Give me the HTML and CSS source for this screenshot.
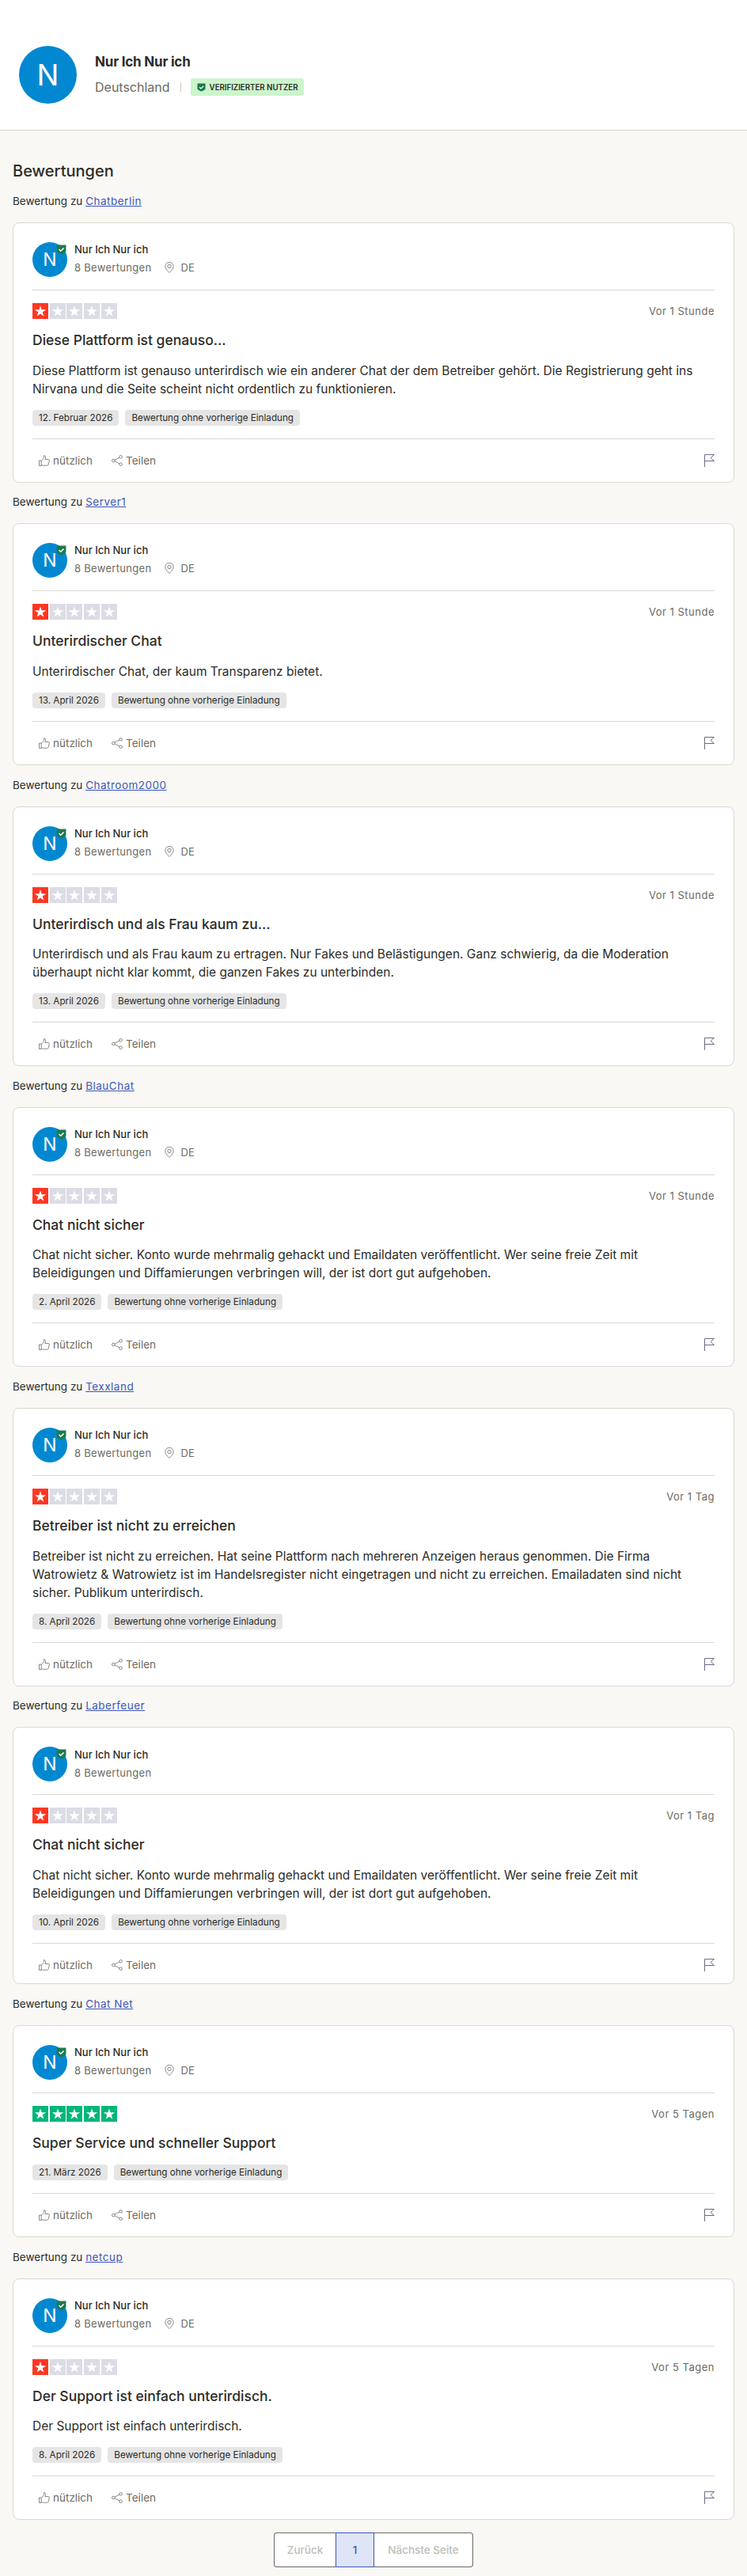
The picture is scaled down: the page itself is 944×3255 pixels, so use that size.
FILE: index.html
```html
<!DOCTYPE html>
<html lang="de">
<head>
<meta charset="utf-8">
<title>Nur Ich Nur ich</title>
<link rel="stylesheet" href="styles.css">
</head>
<body>
<svg class="defs" width="0" height="0" aria-hidden="true">
  <symbol id="star" viewBox="0 0 20 20"><path d="M10 3.2l1.7 5.1h5.4l-4.4 3.1 1.7 5.2L10 13.4l-4.4 3.2 1.7-5.2-4.400-3.100h5.400z" fill="#fff"/></symbol>
  <symbol id="thumb" viewBox="0 0 14 14"><g fill="none" stroke="#6c6a63" stroke-width=".8"><path d="M.5 7h2.600v6.500H.5z"/><path d="M3.100 7.500l2.700-2.800c.6-.7.8-1.400.8-2.300V.6c1.200 0 2 .9 2 2.200 0 1-.3 1.900-.7 2.700h4.100c.9 0 1.500.7 1.300 1.500l-1 4.800c-.2.900-.8 1.400-1.700 1.400H5.600c-1 0-1.700-.3-2.500-.9"/></g></symbol>
  <symbol id="share" viewBox="0 0 14 14"><g fill="none" stroke="#6c6a63" stroke-width=".8"><circle cx="2.300" cy="7" r="1.800"/><circle cx="11.600" cy="2.300" r="1.800"/><circle cx="11.600" cy="11.700" r="1.800"/><path d="M3.900 6.200l6.100-3.100M3.900 7.800l6.100 3.100"/></g></symbol>
  <symbol id="flag" viewBox="0 0 13 16"><path d="M.5 16V.5h12L8 4.500l4.500 4H.5" fill="none" stroke="#6e6b85" stroke-width="1"/></symbol>
  <symbol id="pin" viewBox="0 0 12 14"><g fill="none" stroke="#6c6a63" stroke-width=".8"><path d="M6 13.500C3.800 11.200.8 8.500.8 5.500a5.200 5.200 0 0 1 10.400 0c0 3-3 5.700-5.200 8z"/><circle cx="6" cy="5.500" r="2.200"/></g></symbol>
  <symbol id="shield" viewBox="0 0 12 12"><path d="M.5.500h11v7.300c-1.500 1.800-3.500 3-5.500 3.700C4 10.800 2 9.600.5 7.800z" fill="#1c7a4e"/><path d="M3.300 5.600l2 2 3.500-3.400" fill="none" stroke="#fff" stroke-width="1.400"/></symbol>
</svg>

<header class="profile">
  <div class="profile-avatar">N</div>
  <div class="profile-info">
    <h1 class="profile-name">Nur Ich Nur ich</h1>
    <div class="profile-meta">
      <span class="profile-country">Deutschland</span>
      <span class="profile-sep"></span>
      <span class="verified"><svg class="verified-icon"><use href="#shield"/></svg>VERIFIZIERTER NUTZER</span>
    </div>
  </div>
</header>

<main class="content">
  <h2 class="section-title">Bewertungen</h2>

  <section class="entry">
    <p class="entry-label">Bewertung zu <a href="#">Chatberlin</a></p>
    <article class="card">
      <div class="user">
        <div class="user-avatar">N<svg class="user-badge"><use href="#shield"/></svg></div>
        <div class="user-info">
          <div class="user-name">Nur Ich Nur ich</div>
          <div class="user-meta"><span>8 Bewertungen</span><span class="loc"><svg class="pin"><use href="#pin"/></svg>DE</span></div>
        </div>
      </div>
      <div class="rating-row">
        <div class="stars"><span class="star red"><svg><use href="#star"/></svg></span><span class="star"><svg><use href="#star"/></svg></span><span class="star"><svg><use href="#star"/></svg></span><span class="star"><svg><use href="#star"/></svg></span><span class="star"><svg><use href="#star"/></svg></span></div>
        <time class="age">Vor 1 Stunde</time>
      </div>
      <h3 class="title">Diese Plattform ist genauso...</h3>
      <p class="body">Diese Plattform ist genauso unterirdisch wie ein anderer Chat der dem Betreiber gehört. Die Registrierung geht ins Nirvana und die Seite scheint nicht ordentlich zu funktionieren.</p>
      <div class="tags"><span class="tag">12. Februar 2026</span><span class="tag">Bewertung ohne vorherige Einladung</span></div>
      <div class="actions">
        <span class="action"><svg><use href="#thumb"/></svg>nützlich</span>
        <span class="action"><svg><use href="#share"/></svg>Teilen</span>
        <svg class="flag"><use href="#flag"/></svg>
      </div>
    </article>
  </section>

  <section class="entry">
    <p class="entry-label">Bewertung zu <a href="#">Server1</a></p>
    <article class="card">
      <div class="user">
        <div class="user-avatar">N<svg class="user-badge"><use href="#shield"/></svg></div>
        <div class="user-info">
          <div class="user-name">Nur Ich Nur ich</div>
          <div class="user-meta"><span>8 Bewertungen</span><span class="loc"><svg class="pin"><use href="#pin"/></svg>DE</span></div>
        </div>
      </div>
      <div class="rating-row">
        <div class="stars"><span class="star red"><svg><use href="#star"/></svg></span><span class="star"><svg><use href="#star"/></svg></span><span class="star"><svg><use href="#star"/></svg></span><span class="star"><svg><use href="#star"/></svg></span><span class="star"><svg><use href="#star"/></svg></span></div>
        <time class="age">Vor 1 Stunde</time>
      </div>
      <h3 class="title">Unterirdischer Chat</h3>
      <p class="body">Unterirdischer Chat, der kaum Transparenz bietet.</p>
      <div class="tags"><span class="tag">13. April 2026</span><span class="tag">Bewertung ohne vorherige Einladung</span></div>
      <div class="actions">
        <span class="action"><svg><use href="#thumb"/></svg>nützlich</span>
        <span class="action"><svg><use href="#share"/></svg>Teilen</span>
        <svg class="flag"><use href="#flag"/></svg>
      </div>
    </article>
  </section>

  <section class="entry">
    <p class="entry-label">Bewertung zu <a href="#">Chatroom2000</a></p>
    <article class="card">
      <div class="user">
        <div class="user-avatar">N<svg class="user-badge"><use href="#shield"/></svg></div>
        <div class="user-info">
          <div class="user-name">Nur Ich Nur ich</div>
          <div class="user-meta"><span>8 Bewertungen</span><span class="loc"><svg class="pin"><use href="#pin"/></svg>DE</span></div>
        </div>
      </div>
      <div class="rating-row">
        <div class="stars"><span class="star red"><svg><use href="#star"/></svg></span><span class="star"><svg><use href="#star"/></svg></span><span class="star"><svg><use href="#star"/></svg></span><span class="star"><svg><use href="#star"/></svg></span><span class="star"><svg><use href="#star"/></svg></span></div>
        <time class="age">Vor 1 Stunde</time>
      </div>
      <h3 class="title">Unterirdisch und als Frau kaum zu...</h3>
      <p class="body">Unterirdisch und als Frau kaum zu ertragen. Nur Fakes und Belästigungen. Ganz schwierig, da die Moderation überhaupt nicht klar kommt, die ganzen Fakes zu unterbinden.</p>
      <div class="tags"><span class="tag">13. April 2026</span><span class="tag">Bewertung ohne vorherige Einladung</span></div>
      <div class="actions">
        <span class="action"><svg><use href="#thumb"/></svg>nützlich</span>
        <span class="action"><svg><use href="#share"/></svg>Teilen</span>
        <svg class="flag"><use href="#flag"/></svg>
      </div>
    </article>
  </section>

  <section class="entry">
    <p class="entry-label">Bewertung zu <a href="#">BlauChat</a></p>
    <article class="card">
      <div class="user">
        <div class="user-avatar">N<svg class="user-badge"><use href="#shield"/></svg></div>
        <div class="user-info">
          <div class="user-name">Nur Ich Nur ich</div>
          <div class="user-meta"><span>8 Bewertungen</span><span class="loc"><svg class="pin"><use href="#pin"/></svg>DE</span></div>
        </div>
      </div>
      <div class="rating-row">
        <div class="stars"><span class="star red"><svg><use href="#star"/></svg></span><span class="star"><svg><use href="#star"/></svg></span><span class="star"><svg><use href="#star"/></svg></span><span class="star"><svg><use href="#star"/></svg></span><span class="star"><svg><use href="#star"/></svg></span></div>
        <time class="age">Vor 1 Stunde</time>
      </div>
      <h3 class="title">Chat nicht sicher</h3>
      <p class="body">Chat nicht sicher. Konto wurde mehrmalig gehackt und Emaildaten veröffentlicht. Wer seine freie Zeit mit Beleidigungen und Diffamierungen verbringen will, der ist dort gut aufgehoben.</p>
      <div class="tags"><span class="tag">2. April 2026</span><span class="tag">Bewertung ohne vorherige Einladung</span></div>
      <div class="actions">
        <span class="action"><svg><use href="#thumb"/></svg>nützlich</span>
        <span class="action"><svg><use href="#share"/></svg>Teilen</span>
        <svg class="flag"><use href="#flag"/></svg>
      </div>
    </article>
  </section>

  <section class="entry">
    <p class="entry-label">Bewertung zu <a href="#">Texxland</a></p>
    <article class="card">
      <div class="user">
        <div class="user-avatar">N<svg class="user-badge"><use href="#shield"/></svg></div>
        <div class="user-info">
          <div class="user-name">Nur Ich Nur ich</div>
          <div class="user-meta"><span>8 Bewertungen</span><span class="loc"><svg class="pin"><use href="#pin"/></svg>DE</span></div>
        </div>
      </div>
      <div class="rating-row">
        <div class="stars"><span class="star red"><svg><use href="#star"/></svg></span><span class="star"><svg><use href="#star"/></svg></span><span class="star"><svg><use href="#star"/></svg></span><span class="star"><svg><use href="#star"/></svg></span><span class="star"><svg><use href="#star"/></svg></span></div>
        <time class="age">Vor 1 Tag</time>
      </div>
      <h3 class="title">Betreiber ist nicht zu erreichen</h3>
      <p class="body">Betreiber ist nicht zu erreichen. Hat seine Plattform nach mehreren Anzeigen heraus genommen. Die Firma Watrowietz &amp; Watrowietz ist im Handelsregister nicht eingetragen und nicht zu erreichen. Emailadaten sind nicht sicher. Publikum unterirdisch.</p>
      <div class="tags"><span class="tag">8. April 2026</span><span class="tag">Bewertung ohne vorherige Einladung</span></div>
      <div class="actions">
        <span class="action"><svg><use href="#thumb"/></svg>nützlich</span>
        <span class="action"><svg><use href="#share"/></svg>Teilen</span>
        <svg class="flag"><use href="#flag"/></svg>
      </div>
    </article>
  </section>

  <section class="entry">
    <p class="entry-label">Bewertung zu <a href="#">Laberfeuer</a></p>
    <article class="card card-compact">
      <div class="user">
        <div class="user-avatar">N<svg class="user-badge"><use href="#shield"/></svg></div>
        <div class="user-info">
          <div class="user-name">Nur Ich Nur ich</div>
          <div class="user-meta"><span>8 Bewertungen</span></div>
        </div>
      </div>
      <div class="rating-row">
        <div class="stars"><span class="star red"><svg><use href="#star"/></svg></span><span class="star"><svg><use href="#star"/></svg></span><span class="star"><svg><use href="#star"/></svg></span><span class="star"><svg><use href="#star"/></svg></span><span class="star"><svg><use href="#star"/></svg></span></div>
        <time class="age">Vor 1 Tag</time>
      </div>
      <h3 class="title">Chat nicht sicher</h3>
      <p class="body">Chat nicht sicher. Konto wurde mehrmalig gehackt und Emaildaten veröffentlicht. Wer seine freie Zeit mit Beleidigungen und Diffamierungen verbringen will, der ist dort gut aufgehoben.</p>
      <div class="tags"><span class="tag">10. April 2026</span><span class="tag">Bewertung ohne vorherige Einladung</span></div>
      <div class="actions">
        <span class="action"><svg><use href="#thumb"/></svg>nützlich</span>
        <span class="action"><svg><use href="#share"/></svg>Teilen</span>
        <svg class="flag"><use href="#flag"/></svg>
      </div>
    </article>
  </section>

  <section class="entry">
    <p class="entry-label">Bewertung zu <a href="#">Chat Net</a></p>
    <article class="card">
      <div class="user">
        <div class="user-avatar">N<svg class="user-badge"><use href="#shield"/></svg></div>
        <div class="user-info">
          <div class="user-name">Nur Ich Nur ich</div>
          <div class="user-meta"><span>8 Bewertungen</span><span class="loc"><svg class="pin"><use href="#pin"/></svg>DE</span></div>
        </div>
      </div>
      <div class="rating-row">
        <div class="stars"><span class="star green"><svg><use href="#star"/></svg></span><span class="star green"><svg><use href="#star"/></svg></span><span class="star green"><svg><use href="#star"/></svg></span><span class="star green"><svg><use href="#star"/></svg></span><span class="star green"><svg><use href="#star"/></svg></span></div>
        <time class="age">Vor 5 Tagen</time>
      </div>
      <h3 class="title">Super Service und schneller Support</h3>
      <div class="tags"><span class="tag">21. März 2026</span><span class="tag">Bewertung ohne vorherige Einladung</span></div>
      <div class="actions">
        <span class="action"><svg><use href="#thumb"/></svg>nützlich</span>
        <span class="action"><svg><use href="#share"/></svg>Teilen</span>
        <svg class="flag"><use href="#flag"/></svg>
      </div>
    </article>
  </section>

  <section class="entry">
    <p class="entry-label">Bewertung zu <a href="#">netcup</a></p>
    <article class="card">
      <div class="user">
        <div class="user-avatar">N<svg class="user-badge"><use href="#shield"/></svg></div>
        <div class="user-info">
          <div class="user-name">Nur Ich Nur ich</div>
          <div class="user-meta"><span>8 Bewertungen</span><span class="loc"><svg class="pin"><use href="#pin"/></svg>DE</span></div>
        </div>
      </div>
      <div class="rating-row">
        <div class="stars"><span class="star red"><svg><use href="#star"/></svg></span><span class="star"><svg><use href="#star"/></svg></span><span class="star"><svg><use href="#star"/></svg></span><span class="star"><svg><use href="#star"/></svg></span><span class="star"><svg><use href="#star"/></svg></span></div>
        <time class="age">Vor 5 Tagen</time>
      </div>
      <h3 class="title">Der Support ist einfach unterirdisch.</h3>
      <p class="body">Der Support ist einfach unterirdisch.</p>
      <div class="tags"><span class="tag">8. April 2026</span><span class="tag">Bewertung ohne vorherige Einladung</span></div>
      <div class="actions">
        <span class="action"><svg><use href="#thumb"/></svg>nützlich</span>
        <span class="action"><svg><use href="#share"/></svg>Teilen</span>
        <svg class="flag"><use href="#flag"/></svg>
      </div>
    </article>
  </section>

  <nav class="pager">
    <span class="page prev">Zurück</span>
    <span class="page current">1</span>
    <span class="page next">Nächste Seite</span>
  </nav>
</main>
</body>
</html>
```

FILE: styles.css
```css
* { box-sizing: border-box; }
html, body { margin: 0; padding: 0; }
body {
  background: #f9f8f5;
  color: #2c2c28;
  font-family: Inter, "Liberation Sans", sans-serif;
  height: 3255px;
  overflow: hidden;
}
.defs { position: absolute; }
h1, h2, h3, p { margin: 0; }

.profile {
  background: #fff;
  height: 165px;
  border-bottom: 1px solid #ddd8d0;
  display: flex;
  align-items: flex-start;
  padding: 58px 0 0 24px;
  gap: 23px;
}
.profile-avatar {
  width: 73px;
  height: 73px;
  border-radius: 50%;
  background: #0288d1;
  color: #fff;
  font-size: 37px;
  display: flex;
  align-items: center;
  justify-content: center;
}
.profile-info { padding-top: 9px; }
.profile-name { font-size: 17px; line-height: 22px; font-weight: 700; letter-spacing: -.2px; }
.profile-meta { display: flex; align-items: center; margin-top: 10px; }
.profile-country { font-size: 16px; line-height: 22px; color: #6c6a63; }
.profile-sep { width: 1px; height: 12px; background: #d0ccc4; margin: 0 12px 0 13px; }
.verified {
  display: flex;
  align-items: center;
  gap: 5px;
  height: 22px;
  padding: 0 8px;
  background: #ccf5cc;
  border-radius: 3px;
  font-size: 9.7px;
  font-weight: 600;
}
.verified-icon { width: 11px; height: 11px; }

.content { padding: 37px 16px 0; }
.section-title { font-size: 20px; font-weight: 500; line-height: 28px; margin-bottom: 15px; }

.entry { margin-bottom: 15.8px; }
.entry-label { font-size: 13.5px; line-height: 18px; margin-bottom: 18px; }
.entry-label a { color: #3c57bc; letter-spacing: .5px; }

.card {
  background: #fff;
  border: 1px solid #ddd8d0;
  border-radius: 8px;
  padding: 24px 24px 0;
}
.user {
  display: flex;
  gap: 9px;
  padding-bottom: 16px;
  border-bottom: 1px solid #ddd8d0;
}
.user-avatar {
  position: relative;
  width: 44px;
  height: 44px;
  border-radius: 50%;
  background: #0288d1;
  color: #fff;
  font-size: 23px;
  display: flex;
  align-items: center;
  justify-content: center;
}
.user-badge { position: absolute; top: 3px; right: 1px; width: 13px; height: 13px; }
.user-name { font-size: 13px; font-weight: 500; line-height: 18px; }
.user-meta { display: flex; align-items: center; gap: 17px; margin-top: 5px; font-size: 13px; line-height: 18px; letter-spacing: .3px; color: #6c6a63; }
.loc { display: flex; align-items: center; gap: 8px; }
.pin { width: 12px; height: 14px; }

.rating-row { display: flex; justify-content: space-between; align-items: center; padding-top: 16px; }
.stars { display: flex; gap: 1.67px; }
.star { width: 20px; height: 20px; background: #dcdce6; }
.star svg { display: block; width: 20px; height: 20px; }
.star.red { background: #ff3722; }
.star.green { background: #00b67a; }
.age { font-size: 13px; color: #6c6a63; letter-spacing: .5px; }

.title { font-size: 17.5px; font-weight: 500; line-height: 24px; margin-top: 15px; }
.body { font-size: 15.5px; line-height: 23px; margin-top: 14.5px; margin-bottom: 1px; }
.tags { display: flex; gap: 8px; margin-top: 15px; padding-bottom: 16px; border-bottom: 1px solid #ddd8d0; }
.tag { height: 20px; padding: 0 8px; background: #e5e5e5; border-radius: 4px; font-size: 11.7px; line-height: 20px; }

.actions { display: flex; align-items: center; gap: 24px; height: 54px; padding-left: 8px; }
.action { display: flex; align-items: center; gap: 4px; font-size: 13.5px; color: #6c6a63; }
.action svg { width: 14px; height: 14px; }
.flag { width: 13px; height: 16px; margin-left: auto; }

.card-compact .user-info { padding-top: 1px; }
.card-compact .actions { height: 50px; padding-bottom: 0; align-items: flex-start; padding-top: 19px; }

.pager { display: flex; justify-content: center; }
.page {
  height: 44px;
  border: 1px solid #6c6a63;
  background: #fff;
  font-size: 13.5px;
  font-weight: 500;
  color: #bdbdb9;
  display: flex;
  align-items: center;
  justify-content: center;
}
.prev { width: 78px; border-radius: 4px 0 0 4px; border-right: 0; }
.current { width: 49px; background: #dfe4f6; color: #3c57bc; border-color: #3c57bc; }
.next { width: 125px; border-radius: 0 4px 4px 0; border-left: 0; }
```
